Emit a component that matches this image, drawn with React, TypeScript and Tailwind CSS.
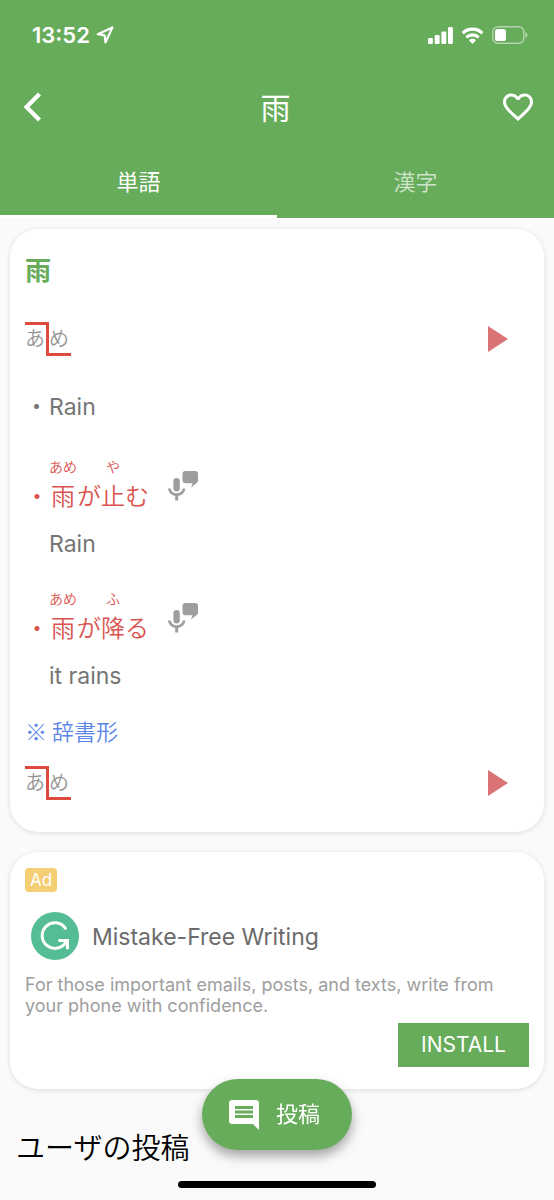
import { useState } from "react";
import { MdComment, MdFavoriteBorder } from "react-icons/md";
import clsx from "clsx";

type Segment = { base: string; ruby?: string };
type Example = { segments: Segment[]; translation: string };

const TABS = ["単語", "漢字"];

const EXAMPLES: Example[] = [
  {
    segments: [{ base: "雨", ruby: "あめ" }, { base: "が" }, { base: "止", ruby: "や" }, { base: "む" }],
    translation: "Rain",
  },
  {
    segments: [{ base: "雨", ruby: "あめ" }, { base: "が" }, { base: "降", ruby: "ふ" }, { base: "る" }],
    translation: "it rains",
  },
];

function StatusBar() {
  return (
    <div className="flex h-[70px] items-center justify-between pr-[26px] pl-8">
      <div className="flex items-center gap-1.5">
        <span className="text-[22px] leading-7 font-semibold">13:52</span>
        <svg viewBox="0 0 18 18" className="size-[18px]" fill="none" stroke="currentColor" strokeWidth="2.2" strokeLinejoin="round">
          <path d="M16.4 1.6 1.8 8.2l6.8 1.2.9 7z" />
        </svg>
      </div>
      <div className="flex items-center gap-2">
        <svg viewBox="0 0 25 17" className="h-[17px] w-[25px]" fill="currentColor">
          <rect x="0" y="11" width="4.9" height="6" rx="1.2" />
          <rect x="6.7" y="8" width="4.9" height="9" rx="1.2" />
          <rect x="13.4" y="4.4" width="4.9" height="12.6" rx="1.2" />
          <rect x="20" y="0" width="4.9" height="17" rx="1.2" />
        </svg>
        <svg viewBox="0 0 24 18" className="h-[17px] w-[23px]" fill="none" stroke="currentColor" strokeWidth="3.4">
          <path d="M1.6 6.6a14.8 14.8 0 0 1 20.8 0" />
          <path d="M5.5 11a9.3 9.3 0 0 1 13 0" />
          <path d="M8.2 14a5.6 5.6 0 0 1 7.6 0L12 18z" fill="currentColor" stroke="none" />
        </svg>
        <svg viewBox="0 0 36 18" className="h-[18px] w-9" fill="none">
          <rect x="0.8" y="0.8" width="31" height="16.4" rx="5" stroke="currentColor" strokeWidth="1.4" opacity="0.5" />
          <rect x="3" y="3" width="11" height="12" rx="2.6" fill="currentColor" />
          <path d="M33.4 6v6c1.3-.5 2-1.7 2-3s-.7-2.5-2-3z" fill="currentColor" opacity="0.5" />
        </svg>
      </div>
    </div>
  );
}

function VoiceIcon() {
  return (
    <svg viewBox="0 0 30 31" className="h-[31px] w-[30px]" fill="#9e9e9e">
      <rect x="5.4" y="8" width="6.4" height="13.5" rx="3.2" />
      <path d="M0 18.5h2.6c.6 3 3 4.8 6.1 4.8s5.5-1.8 6.1-4.8h2.6c-.5 4-3.3 6.8-7.2 7.4V30.5H7.2v-4.6C3.3 25.300.5 22.5 0 18.5z" />
      <path d="M17.5 1H27a3 3 0 0 1 3 3v6.500c0 1-.4 1.700-1 2.300L23 17.500l1.600-4.300h-7.100a3 3 0 0 1-3-3V4a3 3 0 0 1 3-3z" />
    </svg>
  );
}

function AdLogo() {
  return (
    <svg viewBox="0 0 48 48" className="size-12" fill="none">
      <circle cx="24" cy="24" r="24" fill="#54bd95" />
      <g stroke="#fff" strokeWidth="3" strokeLinecap="round">
        <path d="M34.5 16.3A12.8 12.8 0 1 0 35.3 29.5" />
        <path d="M28.5 28.6h8v7.4" />
      </g>
    </svg>
  );
}

// Pitch accent line: high on the first mora, low on the second.
function PitchRow() {
  return (
    <div className="flex items-center justify-between pr-[21px]">
      <div className="flex h-[34px] text-[20px] leading-7 font-[350] text-[#959595]">
        <span className="w-6 border-t-3 border-r-3 border-[#dc4b3e]">あ</span>
        <span className="w-[22px] border-b-3 border-[#dc4b3e] pt-[3px]">め</span>
      </div>
      <button aria-label="再生">
        <svg viewBox="0 0 20 26" className="h-[26px] w-5">
          <path d="M0 0 20 13 0 26z" fill="#da7376" />
        </svg>
      </button>
    </div>
  );
}

function ExampleItem({ segments, translation }: Example) {
  return (
    <li>
      <div className="flex text-[24px] leading-9 font-[350] text-[#d9534f]">
        <span className="self-end">・</span>
        {segments.map((s) => (
          <span key={s.base} className="flex flex-col items-center">
            <span className="mb-0.5 h-5 text-[14px] leading-5">{s.ruby}</span>
            <span>{s.base}</span>
          </span>
        ))}
        <button className="ml-[19px] self-start pt-[13px]" aria-label="発音練習">
          <VoiceIcon />
        </button>
      </div>
      <p className="mt-[13px] pl-6 text-[23px] leading-8 text-[#757575]">{translation}</p>
    </li>
  );
}

export default function App() {
  const [tab, setTab] = useState(0);

  return (
    <div className="min-h-screen bg-[#fafafa] font-['Inter','Noto_Sans_CJK_JP',sans-serif]">
      <header className="bg-[#67ac5b] text-white">
        <StatusBar />
        <div className="flex h-[74px] items-center justify-between pr-[18px] pl-[15px]">
          <button aria-label="戻る">
            <svg viewBox="0 0 36 36" className="size-9" fill="none" stroke="currentColor" strokeWidth="4.2">
              <path d="M24.500 5 11.500 18l13 13" />
            </svg>
          </button>
          <h1 className="pt-0.5 text-[30px] leading-10">雨</h1>
          <button aria-label="お気に入り">
            <MdFavoriteBorder className="size-9" />
          </button>
        </div>
        <nav className="flex h-[74px]">
          {TABS.map((label, i) => (
            <button
              key={label}
              onClick={() => setTab(i)}
              className={clsx(
                "flex-1 border-b-3 pt-1.5 text-[22px]",
                tab === i ? "border-white" : "border-transparent font-[350] text-white/70",
              )}
            >
              {label}
            </button>
          ))}
        </nav>
      </header>

      <main className="px-[10px] pt-[11px] pb-7">
        <section className="rounded-[28px] bg-white px-[15px] pt-6 pb-8 shadow-[0_1px_5px_rgba(0,0,0,0.12)]">
          <h2 className="text-[26px] leading-9 font-bold text-[#67ac5b]">雨</h2>
          <div className="mt-[33px]">
            <PitchRow />
          </div>
          <p className="mt-[35px] flex text-[23px] leading-8 text-[#757575]">
            <span className="w-6">・</span>Rain
          </p>
          <ul className="mt-[34px] space-y-[29px]">
            {EXAMPLES.map((e) => (
              <ExampleItem key={e.translation} {...e} />
            ))}
          </ul>
          <h3 className="mt-[22px] mb-5 font-['Noto_Sans_CJK_JP',sans-serif] text-[22px] leading-8 font-[350] text-[#5b86e5]">
            ※ 辞書形
          </h3>
          <PitchRow />
        </section>

        <section className="mt-5 flex flex-col items-start rounded-[28px] bg-white px-[15px] pt-4 pb-[22px] shadow-[0_1px_5px_rgba(0,0,0,0.12)]">
          <span className="rounded bg-[#f5cd73] px-[5px] text-[17px] leading-6 text-white">Ad</span>
          <div className="mt-5 flex items-center gap-[13px] pl-1.5">
            <AdLogo />
            <h3 className="pt-0.5 text-[23px] leading-8 text-[#6b6b6b]">Mistake-Free Writing</h3>
          </div>
          <p className="mt-[14px] text-[18px] leading-[21px] text-[#9e9e9e]">
            For those important emails, posts, and texts, write from your phone with confidence.
          </p>
          <button className="mt-[7px] h-11 self-end bg-[#67ac5b] px-[23px] text-[21px] text-white">INSTALL</button>
        </section>

        <h2 className="mt-[38px] pl-1.5 text-[29px] leading-11 font-[350] text-black">ユーザの投稿</h2>
      </main>

      <button className="fixed bottom-[50px] left-1/2 flex h-[71px] -translate-x-1/2 items-center gap-[14px] rounded-full bg-[#67ac5b] pr-8 pl-6 text-[22px] text-white shadow-[0_6px_12px_rgba(0,0,0,0.35)]">
        <MdComment className="size-9" />
        投稿
      </button>
      <div className="fixed bottom-3 left-1/2 h-[7px] w-[198px] -translate-x-1/2 rounded-full bg-black" />
    </div>
  );
}
